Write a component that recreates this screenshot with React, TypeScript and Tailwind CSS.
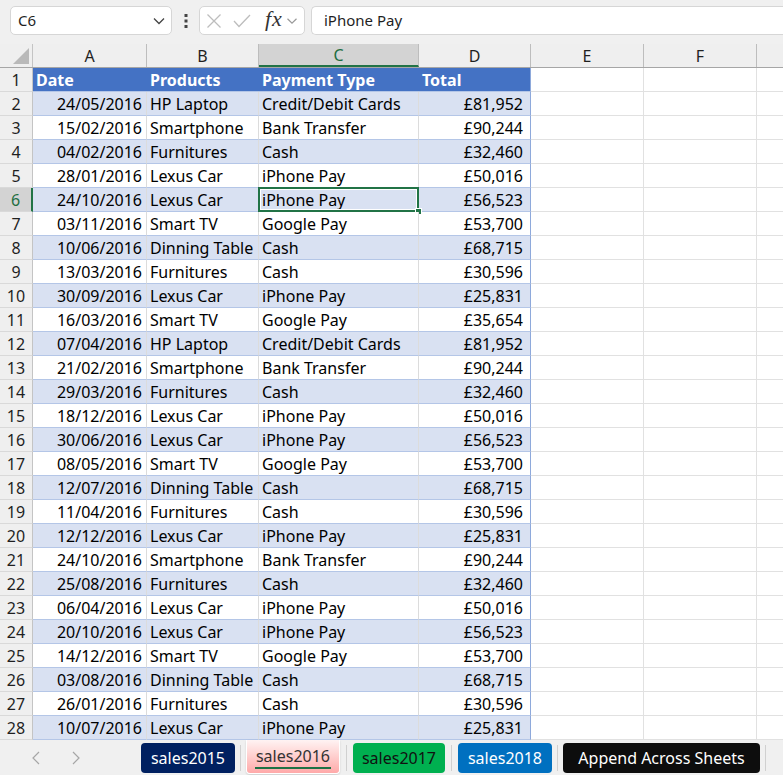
import React from 'react';

const rows: [string, string, string, string][] = [
  ['24/05/2016', 'HP Laptop', 'Credit/Debit Cards', '£81,952'],
  ['15/02/2016', 'Smartphone', 'Bank Transfer', '£90,244'],
  ['04/02/2016', 'Furnitures', 'Cash', '£32,460'],
  ['28/01/2016', 'Lexus Car', 'iPhone Pay', '£50,016'],
  ['24/10/2016', 'Lexus Car', 'iPhone Pay', '£56,523'],
  ['03/11/2016', 'Smart TV', 'Google Pay', '£53,700'],
  ['10/06/2016', 'Dinning Table', 'Cash', '£68,715'],
  ['13/03/2016', 'Furnitures', 'Cash', '£30,596'],
  ['30/09/2016', 'Lexus Car', 'iPhone Pay', '£25,831'],
  ['16/03/2016', 'Smart TV', 'Google Pay', '£35,654'],
  ['07/04/2016', 'HP Laptop', 'Credit/Debit Cards', '£81,952'],
  ['21/02/2016', 'Smartphone', 'Bank Transfer', '£90,244'],
  ['29/03/2016', 'Furnitures', 'Cash', '£32,460'],
  ['18/12/2016', 'Lexus Car', 'iPhone Pay', '£50,016'],
  ['30/06/2016', 'Lexus Car', 'iPhone Pay', '£56,523'],
  ['08/05/2016', 'Smart TV', 'Google Pay', '£53,700'],
  ['12/07/2016', 'Dinning Table', 'Cash', '£68,715'],
  ['11/04/2016', 'Furnitures', 'Cash', '£30,596'],
  ['12/12/2016', 'Lexus Car', 'iPhone Pay', '£25,831'],
  ['24/10/2016', 'Smartphone', 'Bank Transfer', '£90,244'],
  ['25/08/2016', 'Furnitures', 'Cash', '£32,460'],
  ['06/04/2016', 'Lexus Car', 'iPhone Pay', '£50,016'],
  ['20/10/2016', 'Lexus Car', 'iPhone Pay', '£56,523'],
  ['14/12/2016', 'Smart TV', 'Google Pay', '£53,700'],
  ['03/08/2016', 'Dinning Table', 'Cash', '£68,715'],
  ['26/01/2016', 'Furnitures', 'Cash', '£30,596'],
  ['10/07/2016', 'Lexus Car', 'iPhone Pay', '£25,831'],
];

const Chevron = ({ className }: { className?: string }) => (
  <svg width="12" height="8" viewBox="0 0 12 8" className={className}>
    <polyline points="1,1.5 6,6.5 11,1.5" fill="none" stroke="currentColor" strokeWidth="1.3" />
  </svg>
);

const FormulaBar = () => (
  <div className="h-[44px] bg-[#f0f0f0] flex items-start pt-[6px]">
    <div className="ml-[10px] w-[162px] h-[29px] bg-white border border-[#d6d6d6] rounded-[5px] flex items-center pl-[7px] pr-[6px]">
      <span className="text-[15px] text-[#1f1f1f] flex-1">C6</span>
      <Chevron className="text-[#444]" />
    </div>
    <div className="w-[27px] h-[29px] flex items-center justify-center">
      <svg width="4" height="16" viewBox="0 0 4 16">
        <rect x="0.5" y="1" width="3" height="3" fill="#444" />
        <rect x="0.5" y="6.5" width="3" height="3" fill="#444" />
        <rect x="0.5" y="12" width="3" height="3" fill="#444" />
      </svg>
    </div>
    <div className="w-[106px] h-[29px] bg-white border border-[#d6d6d6] rounded-[5px] flex items-center pl-[6px]">
      <svg width="16" height="16" viewBox="0 0 16 16">
        <path d="M1.5 1.5 L14.5 14.5 M14.5 1.5 L1.5 14.5" stroke="#bdbdbd" strokeWidth="1.3" fill="none" />
      </svg>
      <svg width="18" height="16" viewBox="0 0 18 16" className="ml-[11px]">
        <polyline points="1,8 6,13.5 17,2" stroke="#bdbdbd" strokeWidth="1.3" fill="none" />
      </svg>
      <span className="ml-[14px] font-['Liberation_Serif',serif] italic text-[22px] leading-none text-[#333] mt-[-3px] tracking-[1px]">fx</span>
      <Chevron className="ml-[3px] text-[#999] scale-90" />
    </div>
    <div className="ml-[6px] flex-1 h-[29px] bg-white border border-r-0 border-[#d6d6d6] rounded-l-[5px] flex items-center pl-[12px]">
      <span className="text-[15px] text-[#1f1f1f]">iPhone Pay</span>
    </div>
  </div>
);

const colWidths = ['w-[114px]', 'w-[112px]', 'w-[160px]', 'w-[112px]', 'w-[113px]', 'w-[113px]'];

const ColumnHeaders = () => {
  const letters = ['A', 'B', 'C', 'D', 'E', 'F'];
  return (
    <div className="flex h-[24px] bg-[#efefef] border-b border-[#a6a6a6]">
      <div className="w-[33px] border-r border-[#c4c4c4] relative">
        <svg width="16" height="16" viewBox="0 0 16 16" className="absolute right-[3px] bottom-[3px]">
          <polygon points="16,0 16,16 0,16" fill="#b9b9b9" />
        </svg>
      </div>
      {letters.map((l, i) => (
        <div
          key={l}
          className={`${colWidths[i]} flex items-center justify-center text-[16px] pt-[1px] border-r border-[#bdbdbd] ${
            l === 'C' ? 'bg-[#d3d3d3] text-[#1e6e42] border-b-2 border-b-[#217346]' : 'text-[#1f1f1f]'
          }`}
        >
          {l}
        </div>
      ))}
      <div className="flex-1" />
    </div>
  );
};

const RowHeader = ({ n }: { n: number }) => (
  <div
    className={`w-[33px] flex items-center justify-center text-[16px] pt-[1px] border-b border-[#d9d9d9] ${
      n === 6
        ? 'bg-[#d3d3d3] text-[#1e6e42] border-r-2 border-r-[#217346]'
        : 'bg-[#efefef] text-[#1f1f1f] border-r border-r-[#c4c4c4]'
    }`}
  >
    {n}
  </div>
);

const EmptyCells = () => (
  <>
    <div className="w-[113px] border-r border-b border-[#e1e1e1]" />
    <div className="w-[113px] border-r border-b border-[#e1e1e1]" />
    <div className="flex-1 border-b border-[#e1e1e1]" />
  </>
);

const head = 'bg-[#4472c4] border-b border-[#b4c6e7] text-white font-bold px-[3px] pt-[1px] leading-[22px]';

const Sheet = () => (
  <div className="flex flex-col text-black">
    <ColumnHeaders />
    <div className="flex h-[24px]">
      <RowHeader n={1} />
      <div className={`w-[114px] ${head}`}>Date</div>
      <div className={`w-[112px] ${head}`}>Products</div>
      <div className={`w-[160px] ${head}`}>Payment Type</div>
      <div className={`w-[112px] ${head} border-r border-r-[#8ea9db]`}>Total</div>
      <EmptyCells />
    </div>
    {rows.map((r, i) => {
      const n = i + 2;
      const band = n % 2 === 0 ? 'bg-[#d9e1f2]' : 'bg-white';
      const cell = `${band} border-b border-b-[#b4c6e7] pt-[1px] leading-[22px] whitespace-nowrap overflow-hidden`;
      return (
        <div key={n} className="flex h-[24px]">
          <RowHeader n={n} />
          <div className={`w-[114px] ${cell} border-r border-r-[#dcdcdc] text-right pr-[4px]`}>{r[0]}</div>
          <div className={`w-[112px] ${cell} border-r border-r-[#dcdcdc] pl-[3px]`}>{r[1]}</div>
          <div className={`w-[160px] ${cell} border-r border-r-[#dcdcdc] pl-[3px] relative overflow-visible`}>
            {r[2]}
            {n === 6 && (
              <div className="absolute left-[-1px] top-[-1px] right-[-1px] bottom-[-1px] border-2 border-[#217346]">
                <div className="absolute inset-0 border border-white" />
                <div className="absolute right-[-5px] bottom-[-5px] w-[7px] h-[7px] bg-[#217346] border border-white" />
              </div>
            )}
          </div>
          <div className={`w-[112px] ${cell} border-r border-r-[#8ea9db] text-right pr-[7px]`}>{r[3]}</div>
          <EmptyCells />
        </div>
      );
    })}
  </div>
);

const Sep = () => <div className="w-px h-[26px] bg-[#d0d0d0]" />;

const Tabs = () => (
  <div className="h-[35px] bg-[#f0f0f0] flex items-center">
    <div className="w-[40px] ml-[16px] flex justify-center text-[#a6a6a6]">
      <svg width="8" height="14" viewBox="0 0 8 14"><polyline points="7,1 1,7 7,13" fill="none" stroke="currentColor" strokeWidth="1.2" /></svg>
    </div>
    <div className="w-[40px] flex justify-center text-[#a6a6a6]">
      <svg width="8" height="14" viewBox="0 0 8 14"><polyline points="1,1 7,7 1,13" fill="none" stroke="currentColor" strokeWidth="1.2" /></svg>
    </div>
    <div className="ml-[45px] w-[94px] h-[30px] rounded-[4px] bg-[#002060] text-white text-[16px] flex items-center justify-center">sales2015</div>
    <div className="mx-[5px]"><Sep /></div>
    <div className="w-[94px] h-[34px] self-start rounded-b-[4px] border border-t-0 border-white bg-linear-to-b from-[#fff3f3] to-[#ffa9a9] shadow-[0_1px_2px_rgba(0,0,0,0.15)] text-[#333] text-[16px] flex items-center justify-center">
      <span className="border-b-2 border-[#1e7145] leading-[22px] px-[1px]">sales2016</span>
    </div>
    <div className="mx-[6px]"><Sep /></div>
    <div className="w-[92px] h-[30px] rounded-[4px] bg-[#00b050] text-[#111] text-[16px] flex items-center justify-center">sales2017</div>
    <div className="mx-[6px]"><Sep /></div>
    <div className="w-[94px] h-[30px] rounded-[4px] bg-[#0070c0] text-white text-[16px] flex items-center justify-center">sales2018</div>
    <div className="mx-[5px]"><Sep /></div>
    <div className="w-[197px] h-[30px] rounded-[4px] bg-[#0d0d0d] text-white text-[16px] flex items-center justify-center">Append Across Sheets</div>
    <div className="mx-[5px]"><Sep /></div>
  </div>
);

export default function App() {
  return (
    <div className="w-[783px] h-[775px] overflow-hidden bg-white font-['Noto_Sans',sans-serif] text-[16px]">
      <FormulaBar />
      <Sheet />
      <Tabs />
    </div>
  );
}
